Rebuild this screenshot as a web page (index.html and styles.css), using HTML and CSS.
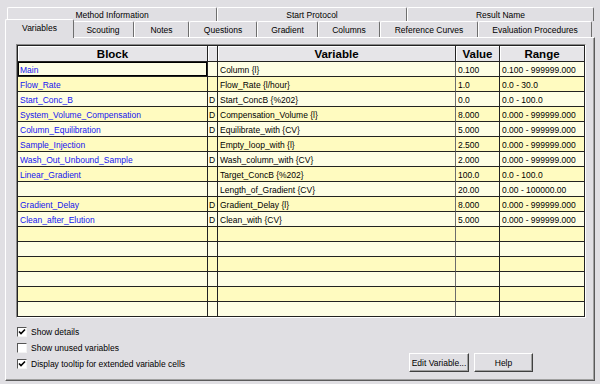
FILE: index.html
```html
<!DOCTYPE html>
<html lang="en">
  <head>
    <meta charset="UTF-8" />
    <title>Variables</title>
    <link rel="stylesheet" href="styles.css">
  </head>
  <body>
    <div class="tabstrip">
      <div class="tabrow back">
        <div class="tab w-method">Method Information</div>
        <div class="tab w-start">Start Protocol</div>
        <div class="tab w-result">Result Name</div>
      </div>
      <div class="tabrow front">
        <div class="tab selected w-variables">Variables</div>
        <div class="tab w-scouting">Scouting</div>
        <div class="tab w-notes">Notes</div>
        <div class="tab w-questions">Questions</div>
        <div class="tab w-gradient">Gradient</div>
        <div class="tab w-columns">Columns</div>
        <div class="tab w-refcurves">Reference Curves</div>
        <div class="tab w-evaluation">Evaluation Procedures</div>
      </div>
    </div>

    <div class="panel">
      <div class="grid-frame">
        <table class="grid">
          <colgroup>
            <col class="c-block" />
            <col class="c-d" />
            <col class="c-variable" />
            <col class="c-value" />
            <col class="c-range" />
          </colgroup>
          <thead>
            <tr>
              <th>Block</th>
              <th></th>
              <th>Variable</th>
              <th>Value</th>
              <th>Range</th>
            </tr>
          </thead>
          <tbody>
            <tr>
              <td class="block focus">Main</td>
              <td class="d"></td>
              <td>Column {l}</td>
              <td class="value">0.100</td>
              <td>0.100 - 999999.000</td>
            </tr>
            <tr>
              <td class="block">Flow_Rate</td>
              <td class="d"></td>
              <td>Flow_Rate {l/hour}</td>
              <td class="value">1.0</td>
              <td>0.0 - 30.0</td>
            </tr>
            <tr>
              <td class="block">Start_Conc_B</td>
              <td class="d">D</td>
              <td>Start_ConcB {%202}</td>
              <td class="value">0.0</td>
              <td>0.0 - 100.0</td>
            </tr>
            <tr>
              <td class="block">System_Volume_Compensation</td>
              <td class="d">D</td>
              <td>Compensation_Volume {l}</td>
              <td class="value">8.000</td>
              <td>0.000 - 999999.000</td>
            </tr>
            <tr>
              <td class="block">Column_Equilibration</td>
              <td class="d">D</td>
              <td>Equilibrate_with {CV}</td>
              <td class="value">5.000</td>
              <td>0.000 - 999999.000</td>
            </tr>
            <tr>
              <td class="block">Sample_Injection</td>
              <td class="d"></td>
              <td>Empty_loop_with {l}</td>
              <td class="value">2.500</td>
              <td>0.000 - 999999.000</td>
            </tr>
            <tr>
              <td class="block">Wash_Out_Unbound_Sample</td>
              <td class="d">D</td>
              <td>Wash_column_with {CV}</td>
              <td class="value">2.000</td>
              <td>0.000 - 999999.000</td>
            </tr>
            <tr>
              <td class="block">Linear_Gradient</td>
              <td class="d"></td>
              <td>Target_ConcB {%202}</td>
              <td class="value">100.0</td>
              <td>0.0 - 100.0</td>
            </tr>
            <tr>
              <td class="block"></td>
              <td class="d"></td>
              <td>Length_of_Gradient {CV}</td>
              <td class="value">20.00</td>
              <td>0.00 - 100000.00</td>
            </tr>
            <tr>
              <td class="block">Gradient_Delay</td>
              <td class="d">D</td>
              <td>Gradient_Delay {l}</td>
              <td class="value">8.000</td>
              <td>0.000 - 999999.000</td>
            </tr>
            <tr>
              <td class="block">Clean_after_Elution</td>
              <td class="d">D</td>
              <td>Clean_with {CV}</td>
              <td class="value">5.000</td>
              <td>0.000 - 999999.000</td>
            </tr>
            <tr><td></td><td class="d"></td><td></td><td class="value"></td><td></td></tr>
            <tr><td></td><td class="d"></td><td></td><td class="value"></td><td></td></tr>
            <tr><td></td><td class="d"></td><td></td><td class="value"></td><td></td></tr>
            <tr><td></td><td class="d"></td><td></td><td class="value"></td><td></td></tr>
            <tr><td></td><td class="d"></td><td></td><td class="value"></td><td></td></tr>
            <tr><td></td><td class="d"></td><td></td><td class="value"></td><td></td></tr>
          </tbody>
        </table>
      </div>

      <div class="footer">
        <div class="options">
          <label class="option">
            <span class="checkbox">
              <svg width="8" height="8" viewBox="0 0 8 8"><polyline points="1,3.5 3,5.5 7,1.5" fill="none" stroke="#000" stroke-width="1.6" /></svg>
            </span>
            Show details
          </label>
          <label class="option">
            <span class="checkbox"></span>
            Show unused variables
          </label>
          <label class="option">
            <span class="checkbox">
              <svg width="8" height="8" viewBox="0 0 8 8"><polyline points="1,3.5 3,5.5 7,1.5" fill="none" stroke="#000" stroke-width="1.6" /></svg>
            </span>
            Display tooltip for extended variable cells
          </label>
        </div>
        <div class="buttons">
          <button class="btn w-edit">Edit Variable...</button>
          <button class="btn w-help">Help</button>
        </div>
      </div>
    </div>
  </body>
</html>
```

FILE: styles.css
```css
body {
  margin: 0;
  background-color: #e0dfe3;
  font-family: "Liberation Sans", Arial, sans-serif;
  font-size: 8.5px;
  color: #000;
  width: 600px;
  height: 384px;
  overflow: hidden;
}

/* tabs */
.tabstrip {
  padding-top: 7px;
}
.tabrow {
  display: flex;
  margin-left: 7px;
}
.tabrow.back {
  height: 14px;
}
.tabrow.front {
  height: 16px;
}
.tab {
  box-sizing: border-box;
  display: flex;
  align-items: center;
  justify-content: center;
  background-color: #e0dfe3;
  border-top: 1px solid #fff;
  border-left: 1px solid #fff;
  border-right: 1px solid #6e6e6e;
  border-radius: 2px 2px 0 0;
  white-space: nowrap;
}
.tab.selected {
  position: relative;
  z-index: 1;
  margin: -2px -2px -1px -2px;
  padding-bottom: 3px;
  width: 69px;
}
.w-method { width: 210px; }
.w-start { width: 190px; }
.w-result { width: 187px; }
.w-scouting { width: 62px; }
.w-notes { width: 55px; }
.w-questions { width: 68px; }
.w-gradient { width: 61px; }
.w-columns { width: 62px; }
.w-refcurves { width: 98px; }
.w-evaluation { width: 114px; }

/* page panel */
.panel {
  box-sizing: border-box;
  margin-left: 5px;
  width: 590px;
  height: 344px;
  padding: 6px 0 0 10px;
  border-top: 1px solid #fff;
  border-left: 1px solid #fff;
  border-right: 1px solid #5a5a5a;
  border-bottom: 1px solid #5a5a5a;
  box-shadow: inset -1px -1px 0 #a0a0a0;
}

/* grid */
.grid-frame {
  display: inline-block;
  border-top: 1px solid #8a8a8a;
  border-left: 1px solid #8a8a8a;
  border-right: 1px solid #fff;
  border-bottom: 1px solid #fff;
}
.grid {
  table-layout: fixed;
  width: 567px;
  border-collapse: separate;
  border-spacing: 0;
  border-top: 1px solid #222;
  border-left: 1px solid #222;
}
.c-block { width: 190px; }
.c-d { width: 10px; }
.c-variable { width: 238px; }
.c-value { width: 44px; }
.c-range { width: 85px; }

.grid th,
.grid td {
  box-sizing: border-box;
  border-right: 1px solid #222;
  border-bottom: 1px solid #222;
  padding: 0 2px;
  white-space: nowrap;
  overflow: hidden;
  text-align: left;
}
.grid th {
  height: 16px;
  background-color: #e6e5e8;
  font-size: 11.5px;
  font-weight: bold;
  text-align: center;
  box-shadow: inset 1px 1px 0 #fff;
}
.grid td {
  height: 15px;
  padding-top: 1px;
  background-color: #fefee4;
}
.grid tbody tr:nth-child(even) td {
  background-color: #fffbc0;
}
.grid td.block {
  color: #1414f0;
}
.grid td.focus {
  box-shadow: inset 0 0 0 1px #000;
}
.grid td.d {
  padding: 1px 0 0 1px;
}
.grid td.value {
  border-left: 0;
}
.grid td:nth-child(3) {
  border-right-color: #6c6c6c;
}

/* footer */
.footer {
  display: flex;
  align-items: flex-end;
  padding-left: 1px;
  margin-top: 4px;
}
.options {
  flex: 1;
  display: flex;
  flex-direction: column;
}
.option {
  display: flex;
  align-items: center;
  gap: 4px;
  height: 16px;
}
.checkbox {
  box-sizing: border-box;
  width: 10px;
  height: 10px;
  display: flex;
  align-items: center;
  justify-content: center;
  background-color: #fff;
  border-top: 1px solid #555;
  border-left: 1px solid #555;
  border-right: 1px solid #f4f4f4;
  border-bottom: 1px solid #f4f4f4;
}
.buttons {
  display: flex;
  gap: 5px;
  margin-right: 61px;
}
.btn {
  box-sizing: border-box;
  height: 19px;
  padding: 0;
  font-family: "Liberation Sans", Arial, sans-serif;
  font-size: 8.5px;
  color: #000;
  background-color: #e0dfe3;
  border-top: 1px solid #fff;
  border-left: 1px solid #fff;
  border-right: 1px solid #404040;
  border-bottom: 1px solid #404040;
  box-shadow: inset -1px -1px 0 #a0a0a0;
}
.w-edit { width: 60px; }
.w-help { width: 59px; }
```
